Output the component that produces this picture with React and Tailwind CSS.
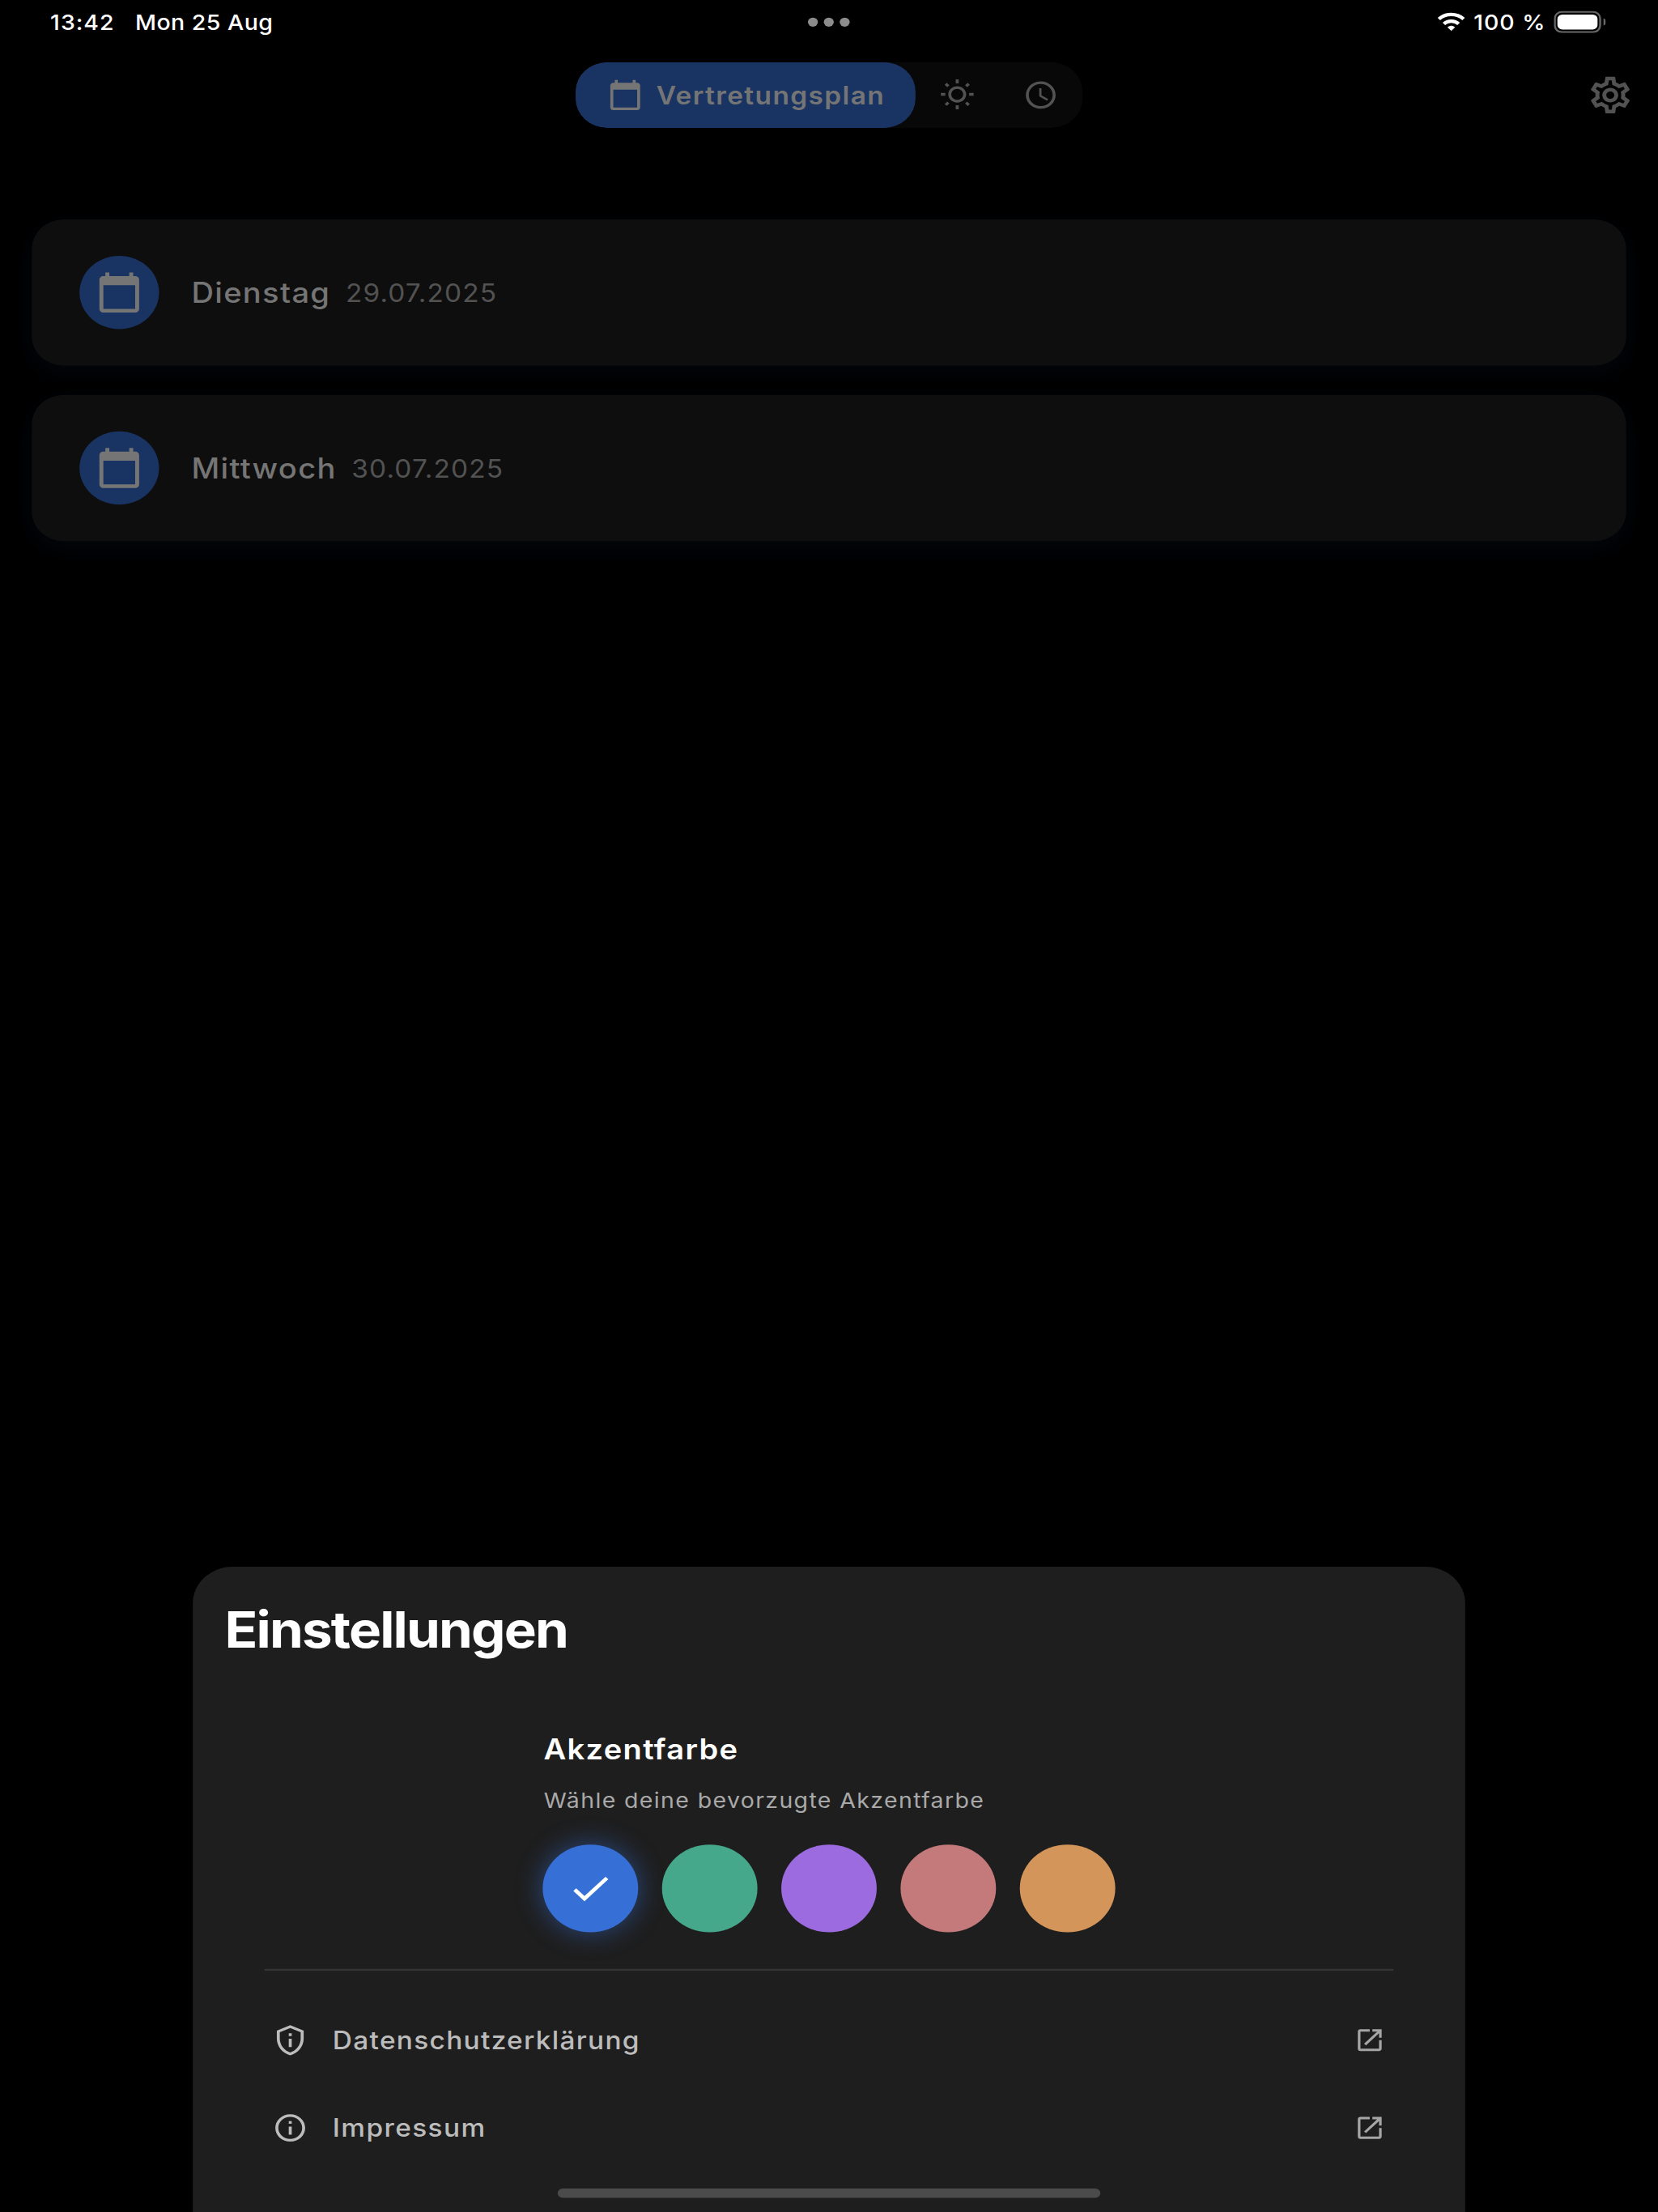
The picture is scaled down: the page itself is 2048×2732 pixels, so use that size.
import React from "react";
import {
  MdCalendarToday,
  MdOutlineWbSunny,
  MdAccessTime,
  MdOutlineSettings,
  MdCheck,
  MdOutlinePrivacyTip,
  MdInfoOutline,
  MdOpenInNew,
} from "react-icons/md";

const days = [
  { name: "Dienstag", date: "29.07.2025" },
  { name: "Mittwoch", date: "30.07.2025" },
];

const accents = [
  { id: "blue", cls: "bg-[#3670d6] shadow-[0_0_12px_2px_rgba(54,112,214,0.4)]", selected: true },
  { id: "green", cls: "bg-[#46a88b]" },
  { id: "purple", cls: "bg-[#9d6be0]" },
  { id: "rose", cls: "bg-[#c47a7a]" },
  { id: "orange", cls: "bg-[#d4955a]" },
];

const links = [
  { label: "Datenschutzerklärung", Icon: MdOutlinePrivacyTip, cls: "tracking-[0.54px]" },
  { label: "Impressum", Icon: MdInfoOutline, cls: "tracking-[0.58px]" },
];

function WifiIcon() {
  return (
    <svg className="h-[9.9px] w-[13.6px] shrink-0 translate-x-[0.2px] overflow-visible" viewBox="0 0 13.6 9.9" fill="none">
      <path d="M0.58 3.46A8.95 8.95 0 0 1 13.02 3.46" stroke="#fff" strokeWidth="1.85" />
      <path d="M3.08 6.05A5.35 5.35 0 0 1 10.52 6.05" stroke="#fff" strokeWidth="1.85" />
      <path d="M6.8 9.7L5.1 7.95A2.5 2.5 0 0 1 8.5 7.95Z" fill="#fff" stroke="#fff" strokeWidth="0.4" strokeLinejoin="round" />
    </svg>
  );
}

function BatteryIcon() {
  return (
    <svg className="h-[12.1px] w-[26.4px] shrink-0 -translate-x-[0.4px]" viewBox="0 0 26.4 12.1" fill="none">
      <rect x="0.5" y="0.5" width="22.8" height="11.1" rx="3.6" stroke="#666" />
      <rect x="1.8" y="1.95" width="20.2" height="8.2" rx="2.5" fill="#fff" />
      <path d="M25 4.1C25.9 4.4 26.4 5.2 26.4 6.05C26.4 6.9 25.9 7.7 25 8Z" fill="#666" />
    </svg>
  );
}

function StatusBar() {
  return (
    <div className="grid h-6 shrink-0 grid-cols-[1fr_auto_1fr] items-center pr-[26px] pl-[25.1px] text-[11.6px] leading-4 font-medium text-white">
      <div className="-mt-[0.8px] flex translate-x-[0.2px] translate-y-[0.2px]">
        <span className="w-[42.7px] tracking-[0.4px]">13:42</span>
        <span className="tracking-[0.2px]">Mon 25 Aug</span>
      </div>
      <div className="mr-[-0.9px] flex translate-x-[0.4px] -translate-y-[0.4px] gap-[3px]">
        <span className="size-[5px] rounded-full bg-[#8c8c8c]" />
        <span className="size-[5px] rounded-full bg-[#8c8c8c]" />
        <span className="size-[5px] rounded-full bg-[#8c8c8c]" />
      </div>
      <div className="flex items-center justify-end">
        <WifiIcon />
        <span className="-mt-[0.8px] ml-[4.1px] w-[40.7px] translate-x-[0.3px] translate-y-[0.2px] whitespace-nowrap tracking-[0.4px]">
          100 %
        </span>
        <BatteryIcon />
      </div>
    </div>
  );
}

function TopBar() {
  return (
    <div className="mt-[10px] flex h-9 shrink-0 items-center pr-3">
      <div className="w-[290px]" />
      <div className="flex h-9 w-[255px] -translate-x-[0.5px] overflow-hidden rounded-[16px] bg-[#080808]">
        <div className="flex w-[171px] items-center rounded-[16px] bg-[#193463] pl-4 text-[#757575]">
          <MdCalendarToday className="size-[18px]" />
          <span className="ml-[6.7px] text-[13.6px] leading-5 font-semibold tracking-[0.58px]">Vertretungsplan</span>
        </div>
        <div className="flex w-[42px] items-center justify-center text-[#525252]">
          <MdOutlineWbSunny className="size-[18px]" />
        </div>
        <div className="flex w-[42px] items-center justify-center text-[#525252]">
          <MdAccessTime className="size-[18px]" />
        </div>
      </div>
      <MdOutlineSettings className="ml-auto size-6 text-[#525252]" />
    </div>
  );
}

function DayCard({ name, date }) {
  return (
    <div className="flex h-20 items-center rounded-[16px] bg-[#0e0e0e] px-6 shadow-[0_4px_12px_rgba(25,52,99,0.12)]">
      <div className="flex size-10 items-center justify-center rounded-full bg-[#193463] text-[#757575]">
        <MdCalendarToday className="size-6" />
      </div>
      <span className="ml-4 translate-x-[0.3px] translate-y-[0.6px] text-[15.5px] leading-6 font-medium tracking-[0.54px] text-[#757575]">
        {name}
      </span>
      <span className="ml-[7.9px] translate-y-[0.2px] text-[13.6px] leading-5 tracking-[0.465px] text-[#525252]">{date}</span>
    </div>
  );
}

function SettingsSheet() {
  return (
    <div className="mx-auto mt-auto flex h-[353px] w-[640px] shrink-0 flex-col rounded-t-[20px] bg-[#1e1e1e] pt-4">
      <h1 className="translate-y-[0.2px] pl-4 text-[27.4px] leading-9 font-bold tracking-[-0.747px] text-white">
        Einstellungen
      </h1>
      <div className="mx-auto mt-[38.3px] w-[288px]">
        <h2 className="translate-y-[0.6px] pl-[0.5px] text-[15.5px] leading-5 font-semibold tracking-[0.534px] text-white">
          Akzentfarbe
        </h2>
        <p className="mt-[9.3px] pl-[0.6px] text-[11.6px] leading-4 tracking-[0.562px] text-[#a9a9a9]">
          Wähle deine bevorzugte Akzentfarbe
        </p>
        <div className="mt-[16.4px] flex gap-3">
          {accents.map((a) => (
            <div key={a.id} className={`flex size-12 items-center justify-center rounded-full ${a.cls}`}>
              {a.selected && <MdCheck className="size-6 text-white" />}
            </div>
          ))}
        </div>
      </div>
      <div className="mx-9 mt-5 h-px shrink-0 bg-[#353535]" />
      <div className="mt-[14px] flex flex-col px-10">
        {links.map(({ label, Icon, cls }) => (
          <div key={label} className="flex h-12 items-center">
            <Icon className="size-[18px] text-[#bcbcbc]" />
            <span className={`ml-3 translate-x-[0.3px] text-[13.6px] leading-5 font-medium text-[#bcbcbc] ${cls}`}>
              {label}
            </span>
            <MdOpenInNew className="ml-auto size-4 text-[#a5a5a5]" />
          </div>
        ))}
      </div>
      <div className="mx-auto mt-[9px] h-[5.4px] w-[273px] shrink-0 -translate-x-[0.5px] translate-y-[0.2px] rounded-full bg-[#4b4b4b]" />
    </div>
  );
}

export default function App() {
  return (
    <div className="h-[2732px] w-[2048px] overflow-hidden bg-black">
      <div className="flex h-[1210px] w-[834px] origin-top-left scale-x-[2.45564] scale-y-[2.25785] flex-col bg-black font-['Inter',sans-serif]">
        <StatusBar />
        <TopBar />
        <div className="mt-[50px] flex flex-col gap-4 px-4">
          {days.map((d) => (
            <DayCard key={d.name} {...d} />
          ))}
        </div>
        <SettingsSheet />
      </div>
    </div>
  );
}
